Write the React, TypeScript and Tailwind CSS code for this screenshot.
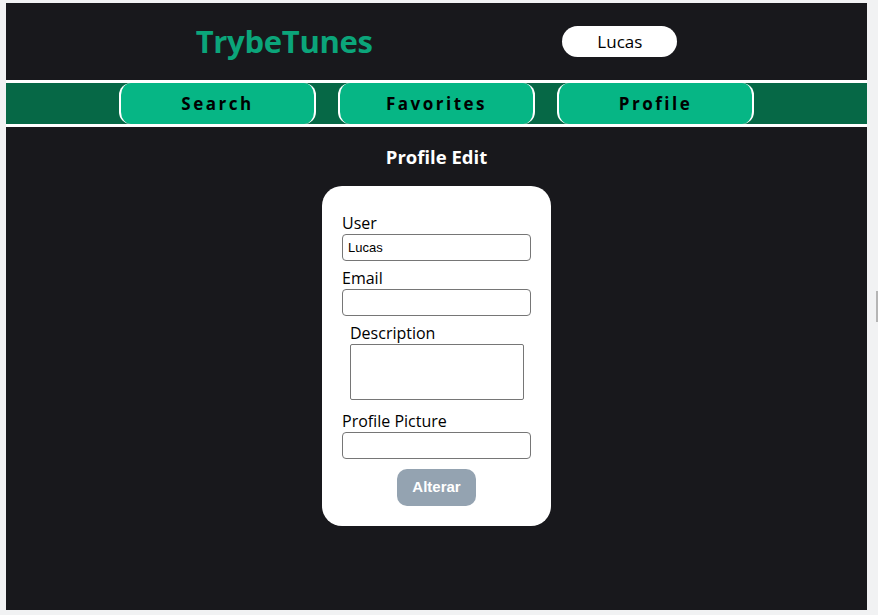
import { useState } from "react"

const navItems = ["Search", "Favorites", "Profile"]

export default function App() {
  const [user, setUser] = useState("Lucas")
  const [email, setEmail] = useState("")
  const [description, setDescription] = useState("")
  const [image, setImage] = useState("")

  return (
    <div className="min-h-screen bg-[#f1f2f3] pt-[3px] pl-[6px] pr-[11px] pb-[5px] font-['Open_Sans',sans-serif]">
      {/* page */}
      <div className="bg-[#18181c] h-[607px] flex flex-col">
        {/* header */}
        <header className="h-[77px] flex items-center justify-evenly">
          <h1 className="text-[31px] font-bold text-[#0ba57a] tracking-[-0.3px] leading-none pb-[1px]">
            TrybeTunes
          </h1>
          <div className="w-[115px] h-[31px] rounded-full bg-white flex items-center justify-center text-[17px] text-black">
            Lucas
          </div>
        </header>

        {/* navigation */}
        <nav className="border-y-[3px] border-white bg-[#066846] h-[47px] flex justify-center gap-[22px]">
          {navItems.map((item) => (
            <a
              key={item}
              href="#"
              className="w-[197px] h-full rounded-xl border-x-2 border-white bg-[#06b685] flex items-center justify-center text-[17px] font-bold tracking-[2.5px] text-black"
            >
              {item}
            </a>
          ))}
        </nav>

        {/* content */}
        <main className="flex flex-col items-center">
          <h2 className="mt-[18px] text-[18.5px] font-bold text-white leading-[24px]">Profile Edit</h2>

          <form
            className="mt-[17px] w-[229px] bg-white rounded-[20px] px-[20px] pt-[26px] pb-[20px] flex flex-col text-black"
            onSubmit={(e) => e.preventDefault()}
          >
            <label className="text-[16px] leading-[22px]">User</label>
            <input
              value={user}
              onChange={(e) => setUser(e.target.value)}
              className="h-[27px] w-full border border-[#767676] rounded-[4px] px-[5px] text-[13px] font-['Liberation_Sans',sans-serif] outline-none"
            />

            <label className="mt-[6px] text-[16px] leading-[22px]">Email</label>
            <input
              value={email}
              onChange={(e) => setEmail(e.target.value)}
              className="h-[27px] w-full border border-[#767676] rounded-[4px] px-[5px] text-[13px] font-['Liberation_Sans',sans-serif] outline-none"
            />

            <div className="mt-[6px] px-[8px] flex flex-col">
              <label className="text-[16px] leading-[22px]">Description</label>
              <textarea
                value={description}
                onChange={(e) => setDescription(e.target.value)}
                className="h-[56px] w-[174px] border border-[#767676] rounded-[2px] resize-none outline-none"
              />
            </div>

            <label className="mt-[10px] text-[16px] leading-[22px]">Profile Picture</label>
            <input
              value={image}
              onChange={(e) => setImage(e.target.value)}
              className="h-[27px] w-full border border-[#767676] rounded-[4px] px-[5px] text-[13px] font-['Liberation_Sans',sans-serif] outline-none"
            />

            <button
              type="submit"
              disabled
              className="mt-[10px] self-center w-[79px] h-[37px] rounded-[10px] bg-[#94a3b1] text-white text-[15px] font-bold font-['Liberation_Sans',sans-serif]"
            >
              Alterar
            </button>
          </form>
        </main>
      </div>

      {/* scrollbar thumb peeking in */}
      <div className="fixed right-0 top-[291px] w-[2px] h-[31px] bg-[#b5b5b5]" />
    </div>
  )
}
